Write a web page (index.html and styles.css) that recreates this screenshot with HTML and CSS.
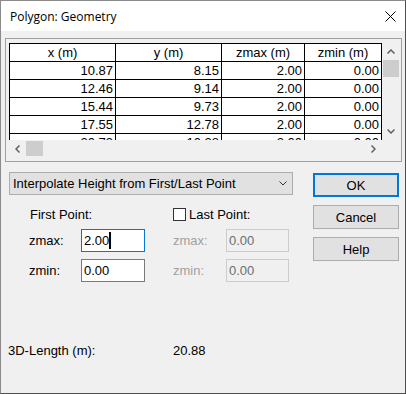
FILE: index.html
```html
<!DOCTYPE html>
<html lang="en">
<head>
    <meta charset="UTF-8">
    <title>Polygon: Geometry</title>
    <link rel="stylesheet" href="styles.css">
</head>
<body>
    <div class="window">
        <div class="titlebar">
            <span class="title">Polygon: Geometry</span>
            <svg class="close" width="11" height="11" viewBox="0 0 11 11">
                <path d="M0.5 0.5L10.5 10.5M10.5 0.5L0.5 10.5" stroke="#000" stroke-width="1"></path>
            </svg>
        </div>

        <div class="content">
            <div class="grid-frame">
                <div class="grid-view">
                    <div class="cells-view">
                        <div class="cells">
                            <div class="cell head">x (m)</div>
                            <div class="cell head">y (m)</div>
                            <div class="cell head">zmax (m)</div>
                            <div class="cell head">zmin (m)</div>

                            <div class="cell">10.87</div>
                            <div class="cell">8.15</div>
                            <div class="cell">2.00</div>
                            <div class="cell">0.00</div>

                            <div class="cell">12.46</div>
                            <div class="cell">9.14</div>
                            <div class="cell">2.00</div>
                            <div class="cell">0.00</div>

                            <div class="cell">15.44</div>
                            <div class="cell">9.73</div>
                            <div class="cell">2.00</div>
                            <div class="cell">0.00</div>

                            <div class="cell">17.55</div>
                            <div class="cell">12.78</div>
                            <div class="cell">2.00</div>
                            <div class="cell">0.00</div>

                            <div class="cell">20.73</div>
                            <div class="cell">10.28</div>
                            <div class="cell">2.00</div>
                            <div class="cell">0.00</div>
                        </div>
                    </div>

                    <div class="vscroll">
                        <div class="arrow">
                            <svg width="8" height="5" viewBox="0 0 8 5"><polyline points="0.5,4.5 4,1 7.5,4.5" fill="none" stroke="#606060" stroke-width="1.5"></polyline></svg>
                        </div>
                        <div class="thumb"></div>
                        <div class="track"></div>
                        <div class="arrow">
                            <svg width="8" height="5" viewBox="0 0 8 5"><polyline points="0.5,0.5 4,4 7.5,0.5" fill="none" stroke="#606060" stroke-width="1.5"></polyline></svg>
                        </div>
                    </div>

                    <div class="hscroll">
                        <div class="arrow">
                            <svg width="5" height="8" viewBox="0 0 5 8"><polyline points="4.5,0.5 1,4 4.5,7.5" fill="none" stroke="#606060" stroke-width="1.5"></polyline></svg>
                        </div>
                        <div class="thumb"></div>
                        <div class="track"></div>
                        <div class="arrow">
                            <svg width="5" height="8" viewBox="0 0 5 8"><polyline points="0.5,0.5 4,4 0.5,7.5" fill="none" stroke="#606060" stroke-width="1.5"></polyline></svg>
                        </div>
                    </div>

                    <div class="corner"></div>
                </div>
            </div>

            <div class="lower">
                <div class="left-col">
                    <div class="combo">
                        <span>Interpolate Height from First/Last Point</span>
                        <svg width="8" height="5" viewBox="0 0 8 5"><polyline points="0.5,0.5 4,4 7.5,0.5" fill="none" stroke="#333" stroke-width="1"></polyline></svg>
                    </div>

                    <div class="points">
                        <div class="heading first">First Point:</div>
                        <div class="heading last"><span class="checkbox"></span>Last Point:</div>

                        <div class="lbl">zmax:</div>
                        <div class="edit focus">2.00<span class="caret"></span></div>
                        <div class="lbl off">zmax:</div>
                        <div class="edit off">0.00</div>

                        <div class="lbl">zmin:</div>
                        <div class="edit">0.00</div>
                        <div class="lbl off">zmin:</div>
                        <div class="edit off">0.00</div>
                    </div>
                </div>

                <div class="buttons">
                    <button class="btn default">OK</button>
                    <button class="btn">Cancel</button>
                    <button class="btn">Help</button>
                </div>
            </div>

            <div class="length-row">
                <span class="length-label">3D-Length (m):</span>
                <span>20.88</span>
            </div>
        </div>
    </div>
</body>
</html>
```

FILE: styles.css
```css
/* Classic dialog look */
:root {
    --face: #f0f0f0;
    --btn-face: #e1e1e1;
    --btn-border: #adadad;
    --accent: #0078d7;
    --gray-text: #6d6d6d;
}

* {
    box-sizing: border-box;
}

html, body {
    margin: 0;
    padding: 0;
    background: #3c3c3c;
}

body {
    font-family: "Liberation Sans", Arial, sans-serif;
    font-size: 13px;
    color: #000;
}

.window {
    width: 406px;
    height: 394px;
    background: var(--face);
    border-left: 1px solid #8a8a8a;
    border-top: 1px solid #8a8a8a;
    border-right: 1px solid #4d4d4d;
    border-bottom: 1px solid #4d4d4d;
    display: flex;
    flex-direction: column;
}

.titlebar {
    height: 30px;
    background: #fff;
    display: flex;
    align-items: center;
    justify-content: space-between;
    padding: 0 9px 0 9px;
}

.title {
    font-family: "Segoe UI", "Open Sans", "Liberation Sans", sans-serif;
    font-size: 12px;
}

/* grid box */
.grid-frame {
    margin: 7px 0 0 4px;
    width: 397px;
    height: 124px;
    border: 1px solid #a0a0a0;
    padding: 4px 1px 0 3px;
}

.grid-view {
    display: grid;
    grid-template-columns: 373px 18px;
    grid-template-rows: 97px 17px;
}

.cells-view {
    overflow: hidden;
    background: #fff;
}

.cells {
    display: grid;
    grid-template-columns: 106px 106px 83px 77px;
    border-left: 1px solid #000;
    border-top: 1px solid #000;
}

.cell {
    height: 18px;
    line-height: 17px;
    border-right: 1px solid #000;
    border-bottom: 1px solid #000;
    text-align: right;
    padding-right: 2px;
    background: #fff;
}

.cell.head {
    text-align: center;
    padding-right: 0;
}

.vscroll {
    display: flex;
    flex-direction: column;
}

.hscroll {
    display: flex;
}

.arrow {
    width: 17px;
    height: 17px;
    flex: none;
    display: flex;
    align-items: center;
    justify-content: center;
}

.vscroll .arrow {
    width: 18px;
}

.track {
    flex: 1;
}

.vscroll .thumb {
    height: 17px;
    margin: 0 1px;
    background: #cdcdcd;
}

.hscroll .thumb {
    width: 17px;
    margin: 1px 0;
    background: #cdcdcd;
}

/* lower part */
.lower {
    display: flex;
    margin-top: 10px;
    padding-left: 8px;
    gap: 20px;
}

.left-col {
    width: 284px;
}

.combo {
    height: 23px;
    background: var(--btn-face);
    border: 1px solid var(--btn-border);
    display: flex;
    align-items: center;
    justify-content: space-between;
    padding: 0 5px 0 3px;
}

.points {
    display: grid;
    grid-template-columns: 52px 64px 81px 63px;
    grid-template-rows: 15px 23px 23px;
    row-gap: 7px;
    margin-top: 12px;
    padding-left: 20px;
    align-items: center;
}

.heading.first {
    grid-column: 1 / 3;
    padding-left: 1px;
}

.heading.last {
    grid-column: 3 / 5;
    display: flex;
    align-items: center;
    gap: 3px;
    padding-left: 28px;
}

.checkbox {
    width: 13px;
    height: 13px;
    background: #fff;
    border: 1px solid #333;
}

.lbl.off {
    color: #a0a0a0;
    padding-left: 28px;
}

.edit {
    height: 23px;
    background: #fff;
    border: 1px solid #7a7a7a;
    padding-left: 2px;
    line-height: 21px;
    display: flex;
    align-items: center;
}

.edit.focus {
    border-color: var(--accent);
}

.edit.off {
    background: var(--face);
    border-color: #cccccc;
    color: var(--gray-text);
}

.caret {
    width: 2px;
    height: 17px;
    background: #000;
}

.buttons {
    display: flex;
    flex-direction: column;
    gap: 8px;
    margin-top: 1px;
}

.btn {
    width: 86px;
    height: 24px;
    background: var(--btn-face);
    border: 1px solid var(--btn-border);
    font-family: inherit;
    font-size: 13px;
    color: #000;
    padding: 0;
}

.btn.default {
    border: 2px solid var(--accent);
}

.length-row {
    display: flex;
    margin-top: 61px;
    padding-left: 7px;
    line-height: 15px;
}

.length-label {
    width: 165px;
}
```
